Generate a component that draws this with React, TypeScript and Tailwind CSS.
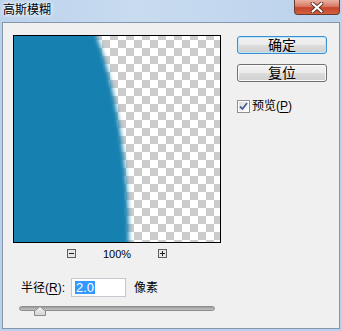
// Gaussian blur dialog (Windows 7 style)
function Preview() {
  return (
    <svg width="206" height="206" viewBox="0 0 206 206" className="block">
      <defs>
        <pattern id="checker" patternUnits="userSpaceOnUse" x="0" y="-4" width="16" height="16">
          <rect width="16" height="16" fill="#ffffff" />
          <rect width="8" height="8" fill="#cccccc" />
          <rect x="8" y="8" width="8" height="8" fill="#cccccc" />
        </pattern>
        <filter id="blur" x="-50%" y="-50%" width="200%" height="200%">
          <feGaussianBlur stdDeviation="2.2" />
        </filter>
      </defs>
      <rect width="206" height="206" fill="url(#checker)" />
      <ellipse cx="0" cy="212" rx="115" ry="305" fill="#1681b1" filter="url(#blur)" />
    </svg>
  );
}

function ZoomBox({ plus }: { plus?: boolean }) {
  return (
    <svg width="9" height="9" viewBox="0 0 9 9" className="block">
      <rect x="0.5" y="0.5" width="8" height="8" fill="#e6e6e6" stroke="#5f5f5f" />
      <line x1="2" y1="4.5" x2="7" y2="4.5" stroke="#222" />
      {plus && <line x1="4.5" y1="2" x2="4.5" y2="7" stroke="#222" />}
    </svg>
  );
}

export default function App() {
  return (
    <div className="w-[342px] h-[331px] flex flex-col overflow-hidden bg-[#b9d1ea] font-['Liberation_Sans','Noto_Sans_CJK_SC',sans-serif] text-[12px] text-black">
      {/* Title bar */}
      <div className="relative h-[22px] shrink-0 bg-[linear-gradient(to_right,#bcd3ec,#c8dbef_40%,#c2d7ee_70%,#bad2ea)]">
        <div className="pl-[3px] pt-[2px] leading-[16px] [text-shadow:0_0_4px_#ffffff,0_0_6px_#ffffff]">高斯模糊</div>
        <div className="absolute top-0 right-[2px] w-[46px] h-[15px] rounded-b-[4px] border border-t-0 border-[#6b3a33] bg-[linear-gradient(to_bottom,#eab1a4,#d97a66_45%,#c6452b_55%,#d4603f)] flex items-center justify-center">
          <svg width="14" height="11" viewBox="0 0 14 11" className="block">
            <path d="M2.5 1.5 L11.5 9.5 M11.5 1.5 L2.5 9.5" stroke="#5b2a22" strokeWidth="3.8" strokeLinecap="round" />
            <path d="M2.5 1.5 L11.5 9.5 M11.5 1.5 L2.5 9.5" stroke="#ffffff" strokeWidth="2.2" strokeLinecap="round" />
          </svg>
        </div>
      </div>

      {/* Client area */}
      <div className="mx-[2px] h-[307px] shrink-0 border border-[#8697ad] bg-[#f0f0f0] pl-[10px] pt-[12px]">
        <div className="flex">
          <div className="w-[208px] h-[208px] border border-black">
            <Preview />
          </div>
          <div className="ml-[16px] pt-[1px] flex flex-col">
            <button className="w-[90px] h-[18px] rounded-[3px] border border-[#3c8fd0] shadow-[inset_0_0_0_1px_#bde6f8] bg-[linear-gradient(to_bottom,#f2f2f2,#ebebeb_50%,#dddddd_50%,#cfcfcf)] flex items-center justify-center text-[14px] leading-[14px] font-normal">
              确定
            </button>
            <button className="mt-[10px] w-[90px] h-[18px] rounded-[3px] border border-[#707070] shadow-[inset_0_0_0_1px_#fbfbfb] bg-[linear-gradient(to_bottom,#f2f2f2,#ebebeb_50%,#dddddd_50%,#cfcfcf)] flex items-center justify-center text-[14px] leading-[14px] font-normal">
              复位
            </button>
            <div className="mt-[17px] flex items-center">
              <svg width="13" height="13" viewBox="0 0 13 13" className="block">
                <defs>
                  <linearGradient id="cb" x1="0" y1="0" x2="1" y2="1">
                    <stop offset="0" stopColor="#dcdcdc" />
                    <stop offset="1" stopColor="#ffffff" />
                  </linearGradient>
                </defs>
                <rect x="0.5" y="0.5" width="12" height="12" fill="#ffffff" stroke="#8f8f8f" />
                <rect x="2" y="2" width="9" height="9" fill="url(#cb)" />
                <path d="M3 6.5 L5.5 9 L10 3" fill="none" stroke="#4a5f97" strokeWidth="1.8" />
              </svg>
              <span className="ml-[2px] leading-[14px]">
                预览(<span className="underline underline-offset-2">P</span>)
              </span>
            </div>
          </div>
        </div>

        {/* Zoom controls */}
        <div className="mt-[6px] w-[208px] flex justify-center">
          <div className="w-[100px] h-[9px] flex items-center justify-between">
            <ZoomBox />
            <span className="text-[11px] leading-[9px] pt-[2px]">100%</span>
            <ZoomBox plus />
          </div>
        </div>

        {/* Radius */}
        <div className="mt-[20px] pl-[8px] flex items-center">
          <span className="leading-[14px]">
            半径(<span className="underline underline-offset-2">R</span>):
          </span>
          <div className="ml-[6px] w-[55px] h-[19px] border border-[#c5c8cf] bg-white flex items-center pl-[3px]">
            <span className="bg-[#3399ff] text-white text-[13px] leading-[13px] px-[1px]">2.0</span>
          </div>
          <span className="ml-[8px] leading-[14px]">像素</span>
        </div>

        {/* Slider */}
        <div className="relative mt-[9px] ml-[6px] w-[196px] h-[10px]">
          <div className="mt-[3px] h-[5px] rounded-full border border-[#8c8c8c] bg-[linear-gradient(to_bottom,#9c9c9c,#c4c4c4)]" />
          <svg width="12" height="10" viewBox="0 0 12 10" className="absolute left-[15px] top-0 block">
            <defs>
              <linearGradient id="th" x1="0" y1="0" x2="0" y2="1">
                <stop offset="0" stopColor="#f6f6f6" />
                <stop offset="1" stopColor="#d2d2d2" />
              </linearGradient>
            </defs>
            <path d="M0.5 9.5 L0.5 5 L6 0.5 L11.5 5 L11.5 9.5 Z" fill="url(#th)" stroke="#8a8a8a" />
          </svg>
        </div>
      </div>
    </div>
  );
}
